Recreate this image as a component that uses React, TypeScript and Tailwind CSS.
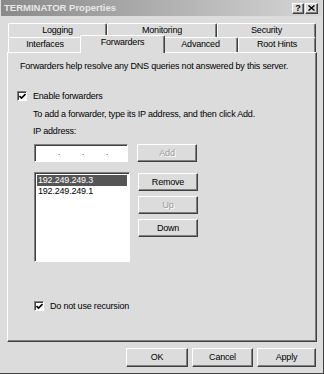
const face = 'bg-[#dcdcdc]';

const raised =
  'border border-t-white border-l-white border-r-[#404040] border-b-[#404040] shadow-[inset_-1px_-1px_0_#808080]';
const sunken =
  'border border-t-[#808080] border-l-[#808080] border-r-white border-b-white shadow-[inset_1px_1px_0_#404040]';

const Button = ({ label, disabled, className = '' }: { label: string; disabled?: boolean; className?: string }) => (
  <div
    className={`${raised} ${face} flex items-center justify-center ${
      disabled ? 'text-[#9a9a9a] [text-shadow:1px_1px_0_#fff]' : 'text-black'
    } ${className}`}
  >
    {label}
  </div>
);

const Check = () => (
  <div className={`${sunken} bg-white w-[10px] h-[10px] flex items-center justify-center shrink-0`}>
    <svg width="7" height="7" viewBox="0 0 7 7">
      <path d="M0.5 3 L2.5 5 L6.5 1" stroke="black" strokeWidth="1.6" fill="none" />
    </svg>
  </div>
);

const Tab = ({ label, width, selected }: { label: string; width: number; selected?: boolean }) => (
  <div
    style={{ width }}
    className={`${face} relative flex items-center justify-center border-t border-l border-t-white border-l-white border-r border-r-[#404040] rounded-t-[2px] shadow-[inset_-1px_0_0_#808080] ${
      selected ? 'h-[18px] -mt-[2px] -mx-[2px] -mb-[1px] z-10 pb-[3px]' : 'h-[15px]'
    }`}
  >
    {label}
  </div>
);

export default function App() {
  return (
    <div
      className={`w-[324px] h-[374px] ${face} flex flex-col border-r border-b border-r-[#404040] border-b-[#404040] text-black text-[9px] tracking-[-0.2px]`}
      style={{ fontFamily: '"Liberation Sans", Arial, sans-serif' }}
    >
      {/* title bar */}
      <div className="h-[16px] mx-[1px] flex items-center justify-between bg-gradient-to-r from-[#8a8a8a] to-[#d6d6d6] pl-[3px] pr-[4px]">
        <span className="text-[9.5px] tracking-normal font-bold text-[#e8e8e8] leading-none">TERMINATOR Properties</span>
        <div className="flex gap-[1px]">
          <div className={`${raised} ${face} w-[12px] h-[11px] flex items-center justify-center text-[9px] font-bold leading-none`}>?</div>
          <div className={`${raised} ${face} w-[13px] h-[11px] flex items-center justify-center`}>
            <svg width="7" height="6" viewBox="0 0 7 6">
              <path d="M0.5 0.5 L6.5 5.5 M6.5 0.5 L0.5 5.5" stroke="black" strokeWidth="1.4" />
            </svg>
          </div>
        </div>
      </div>

      {/* tabs */}
      <div className="mt-[7px] ml-[8px] flex flex-col relative z-10">
        <div className="flex">
          <Tab label="Logging" width={99} />
          <Tab label="Monitoring" width={110} />
          <Tab label="Security" width={99} />
        </div>
        <div className="flex -mt-[1px]">
          <Tab label="Interfaces" width={74} />
          <Tab label="Forwarders" width={85} selected />
          <Tab label="Advanced" width={75} />
          <Tab label="Root Hints" width={78} />
        </div>
      </div>

      {/* panel */}
      <div className={`ml-[7px] w-[310px] h-[290px] ${raised} ${face} flex flex-col leading-[12px]`}>
        <div className="ml-[12px] mt-[7px]">Forwarders help resolve any DNS queries not answered by this server.</div>
        <div className="ml-[9px] mt-[18px] flex items-center gap-[6px] h-[12px]">
          <Check />
          <span>Enable forwarders</span>
        </div>
        <div className="ml-[25px] mt-[6px]">To add a forwarder, type its IP address, and then click Add.</div>
        <div className="ml-[25px] mt-[5px]">IP address:</div>
        <div className="ml-[26px] mt-[7px] flex gap-[9px]">
          <div className={`${sunken} bg-white w-[94px] h-[18px] flex items-center pl-[23px] gap-[22px] text-[8px]`}>
            <span>.</span>
            <span>.</span>
            <span>.</span>
          </div>
          <Button label="Add" disabled className="w-[60px] h-[18px]" />
        </div>
        <div className="ml-[26px] mt-[10px] flex gap-[8px]">
          <div className={`${sunken} bg-white w-[96px] h-[90px] p-[2px] flex flex-col`}>
            <div className="bg-[#555555] text-white h-[11px] leading-[11px] pl-[1px]">192.249.249.3</div>
            <div className="h-[11px] leading-[11px] pl-[1px]">192.249.249.1</div>
          </div>
          <div className="flex flex-col gap-[5px] mt-[1px]">
            <Button label="Remove" className="w-[60px] h-[18px]" />
            <Button label="Up" disabled className="w-[60px] h-[18px]" />
            <Button label="Down" className="w-[60px] h-[18px]" />
          </div>
        </div>
        <div className="ml-[26px] mt-[38px] flex items-center gap-[6px] h-[12px]">
          <Check />
          <span>Do not use recursion</span>
        </div>
      </div>

      {/* dialog buttons */}
      <div className="mt-[6px] ml-[126px] flex gap-[4px]">
        <Button label="OK" className="w-[62px] h-[19px]" />
        <Button label="Cancel" className="w-[61px] h-[19px]" />
        <Button label="Apply" className="w-[59px] h-[19px]" />
      </div>
    </div>
  );
}
